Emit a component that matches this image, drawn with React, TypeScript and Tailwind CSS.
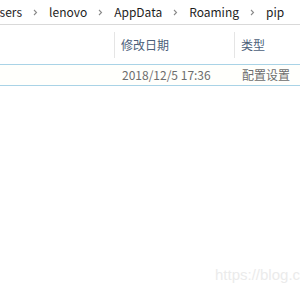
import React from "react";

const font = { fontFamily: '"Noto Sans CJK SC", "Noto Sans", sans-serif' };

function Chevron() {
  return (
    <svg width="5" height="7" viewBox="0 0 5 7" className="mx-[11px]">
      <path d="M1 1 L3.5 3.5 L1 6" fill="none" stroke="#8a8a8a" strokeWidth="1.1" />
    </svg>
  );
}

export default function App() {
  const crumbs = ["Users", "lenovo", "AppData", "Roaming", "pip"];
  return (
    <div className="w-[300px] h-[291px] bg-white overflow-hidden relative" style={font}>
      {/* address bar */}
      <div className="h-[25px] border-b border-[#d9d9d9] flex items-center overflow-hidden">
        <div className="flex items-center -ml-[9px] text-[12px] text-[#1e1e1e] whitespace-nowrap">
          {crumbs.map((c, i) => (
            <React.Fragment key={c}>
              {i > 0 && <Chevron />}
              <span>{c}</span>
            </React.Fragment>
          ))}
        </div>
      </div>

      {/* column headers */}
      <div className="flex h-[26px] mt-[7px] text-[12px] text-[#4c607a]">
        <div className="w-[115px] border-r border-[#e5e5e5]" />
        <div className="w-[120px] border-r border-[#e5e5e5] flex items-center pl-[6px]">修改日期</div>
        <div className="flex-1 flex items-center pl-[6px]">类型</div>
      </div>

      {/* focused row */}
      <div className="mt-[6px] h-[22px] border-y border-[#a9d3e6] bg-[#fffffc] flex items-center text-[12px] text-[#6d6d6d]">
        <div className="w-[116px]" />
        <div className="w-[120px] pl-[6px]">2018/12/5 17:36</div>
        <div className="flex-1 pl-[6px]">配置设置</div>
      </div>

      {/* watermark */}
      <div
        className="absolute left-[215px] top-[267px] text-[15px] leading-none text-[#ebebeb] whitespace-nowrap"
        style={{ fontFamily: '"Liberation Sans", sans-serif' }}
      >
        https://blog.csdn.net
      </div>
    </div>
  );
}
